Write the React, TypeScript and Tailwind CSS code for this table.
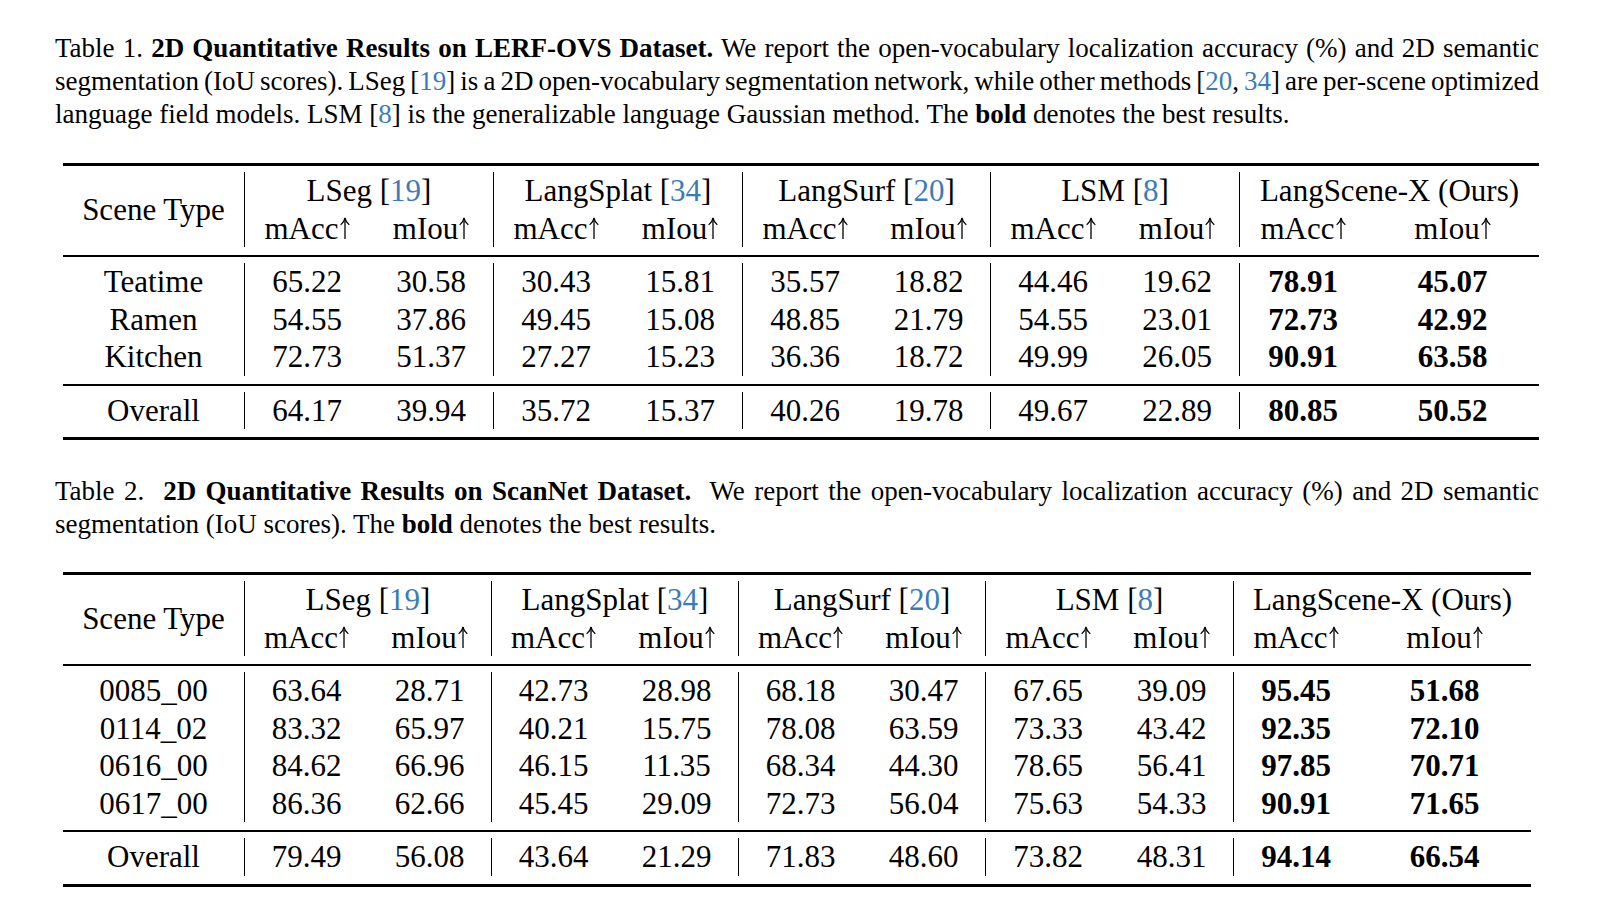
import React from 'react'

const serif = "font-['Liberation_Serif','Times_New_Roman',serif]"
const cite = 'text-[#3b7cb8]'

function Cite({ n }: { n: React.ReactNode }) {
  return (
    <>
      [<span className={cite}>{n}</span>]
    </>
  )
}

// thin math-style up arrow, like $\uparrow$
function Up() {
  return (
    <svg viewBox="0 0 10 22" className="inline-block w-[10px] h-[22px] ml-[1px] align-[-2px]" fill="none" stroke="currentColor">
      <path d="M5 1.5V22" strokeWidth="1.3" />
      <path d="M1 7.5Q4 5.5 5 1Q6 5.5 9 7.5" strokeWidth="1.2" strokeLinecap="round" />
    </svg>
  )
}

// one caption line; all but the last are squeezed a little, then stretched to the full width
function Line({ children, last }: { children: React.ReactNode; last?: boolean }) {
  return (
    <div
      className={
        last
          ? 'h-[33px] whitespace-nowrap'
          : 'h-[33px] whitespace-nowrap [word-spacing:-2px] text-justify [text-align-last:justify]'
      }
    >
      {children}
    </div>
  )
}

type Sub = { a: string; b: string }
type Table = {
  scene: string
  groups: { title: React.ReactNode; w: Sub }[]
  rows: { name: string; vals: string[] }[]
  overall: string[]
}

const titles = [
  <>LSeg <Cite n="19" /></>,
  <>LangSplat <Cite n="34" /></>,
  <>LangSurf <Cite n="20" /></>,
  <>LSM <Cite n="8" /></>,
  <>LangScene-X (Ours)</>,
]

const table1: Table = {
  scene: 'w-[181px]',
  groups: [
    { title: titles[0], w: { a: 'w-[124px]', b: 'w-[124px]' } },
    { title: titles[1], w: { a: 'w-[124px]', b: 'w-[124px]' } },
    { title: titles[2], w: { a: 'w-[124px]', b: 'w-[123px]' } },
    { title: titles[3], w: { a: 'w-[124px]', b: 'w-[124px]' } },
    { title: titles[4], w: { a: 'w-[126px]', b: 'w-[173px]' } },
  ],
  rows: [
    { name: 'Teatime', vals: ['65.22', '30.58', '30.43', '15.81', '35.57', '18.82', '44.46', '19.62', '78.91', '45.07'] },
    { name: 'Ramen', vals: ['54.55', '37.86', '49.45', '15.08', '48.85', '21.79', '54.55', '23.01', '72.73', '42.92'] },
    { name: 'Kitchen', vals: ['72.73', '51.37', '27.27', '15.23', '36.36', '18.72', '49.99', '26.05', '90.91', '63.58'] },
  ],
  overall: ['64.17', '39.94', '35.72', '15.37', '40.26', '19.78', '49.67', '22.89', '80.85', '50.52'],
}

const table2: Table = {
  scene: 'w-[181px]',
  groups: [
    { title: titles[0], w: { a: 'w-[123px]', b: 'w-[123px]' } },
    { title: titles[1], w: { a: 'w-[123px]', b: 'w-[123px]' } },
    { title: titles[2], w: { a: 'w-[123px]', b: 'w-[123px]' } },
    { title: titles[3], w: { a: 'w-[124px]', b: 'w-[123px]' } },
    { title: titles[4], w: { a: 'w-[124px]', b: 'w-[173px]' } },
  ],
  rows: [
    { name: '0085_00', vals: ['63.64', '28.71', '42.73', '28.98', '68.18', '30.47', '67.65', '39.09', '95.45', '51.68'] },
    { name: '0114_02', vals: ['83.32', '65.97', '40.21', '15.75', '78.08', '63.59', '73.33', '43.42', '92.35', '72.10'] },
    { name: '0616_00', vals: ['84.62', '66.96', '46.15', '11.35', '68.34', '44.30', '78.65', '56.41', '97.85', '70.71'] },
    { name: '0617_00', vals: ['86.36', '62.66', '45.45', '29.09', '72.73', '56.04', '75.63', '54.33', '90.91', '71.65'] },
  ],
  overall: ['79.49', '56.08', '43.64', '21.29', '71.83', '48.60', '73.82', '48.31', '94.14', '66.54'],
}

const row = 'h-[37.5px] flex items-center justify-center whitespace-nowrap'

function Body({ t, rows }: { t: Table; rows: { name: string; vals: string[] }[] }) {
  return (
    <div className="flex pt-[6px] pb-[8px]">
      <div className={t.scene}>
        {rows.map((r) => (
          <div key={r.name} className={row}>
            {r.name}
          </div>
        ))}
      </div>
      {t.groups.map((g, gi) => (
        <div key={gi} className="flex border-l border-black">
          <div className={g.w.a}>
            {rows.map((r) => (
              <div key={r.name} className={gi === 4 ? row + ' font-bold' : row}>
                {r.vals[gi * 2]}
              </div>
            ))}
          </div>
          <div className={g.w.b}>
            {rows.map((r) => (
              <div key={r.name} className={gi === 4 ? row + ' font-bold' : row}>
                {r.vals[gi * 2 + 1]}
              </div>
            ))}
          </div>
        </div>
      ))}
    </div>
  )
}

function ResultTable({ t }: { t: Table }) {
  return (
    <div className="ml-[8px] w-fit text-[31px] leading-none">
      <div className="h-[3px] bg-black" />
      {/* header */}
      <div className="flex pt-[6px] pb-[8px]">
        <div className={t.scene + ' flex items-center justify-center'}>Scene Type</div>
        {t.groups.map((g, gi) => (
          <div key={gi} className="border-l border-black">
            <div className={row}>{g.title}</div>
            <div className="flex">
              <div className={g.w.a + ' ' + row}>
                mAcc
                <Up />
              </div>
              <div className={g.w.b + ' ' + row}>
                mIou
                <Up />
              </div>
            </div>
          </div>
        ))}
      </div>
      <div className="h-[2px] bg-black" />
      <Body t={t} rows={t.rows} />
      <div className="h-[2px] bg-black" />
      <Body t={t} rows={[{ name: 'Overall', vals: t.overall }]} />
      <div className="h-[3px] bg-black" />
    </div>
  )
}

export default function App() {
  return (
    <div className={serif + ' min-h-screen bg-white text-black pt-[32px] pl-[55px]'}>
      <div className="w-[1484px] text-[27px] leading-[33px]">
        <Line>
          Table 1. <b>2D Quantitative Results on LERF-OVS Dataset.</b> We report the open-vocabulary localization
          accuracy (%) and 2D semantic
        </Line>
        <Line>
          segmentation (IoU scores). LSeg <Cite n="19" /> is a 2D open-vocabulary segmentation network, while other
          methods [<span className={cite}>20</span>, <span className={cite}>34</span>] are per-scene optimized
        </Line>
        <Line last>
          language field models. LSM <Cite n="8" /> is the generalizable language Gaussian method. The <b>bold</b>{' '}
          denotes the best results.
        </Line>
      </div>

      <div className="mt-[32px]">
        <ResultTable t={table1} />
      </div>

      <div className="mt-[35px] w-[1484px] text-[27px] leading-[33px]">
        <Line>
          Table 2.&nbsp; <b>2D Quantitative Results on ScanNet Dataset.</b>&nbsp; We report the open-vocabulary
          localization accuracy (%) and 2D semantic
        </Line>
        <Line last>
          segmentation (IoU scores). The <b>bold</b> denotes the best results.
        </Line>
      </div>

      <div className="mt-[31px]">
        <ResultTable t={table2} />
      </div>
    </div>
  )
}
